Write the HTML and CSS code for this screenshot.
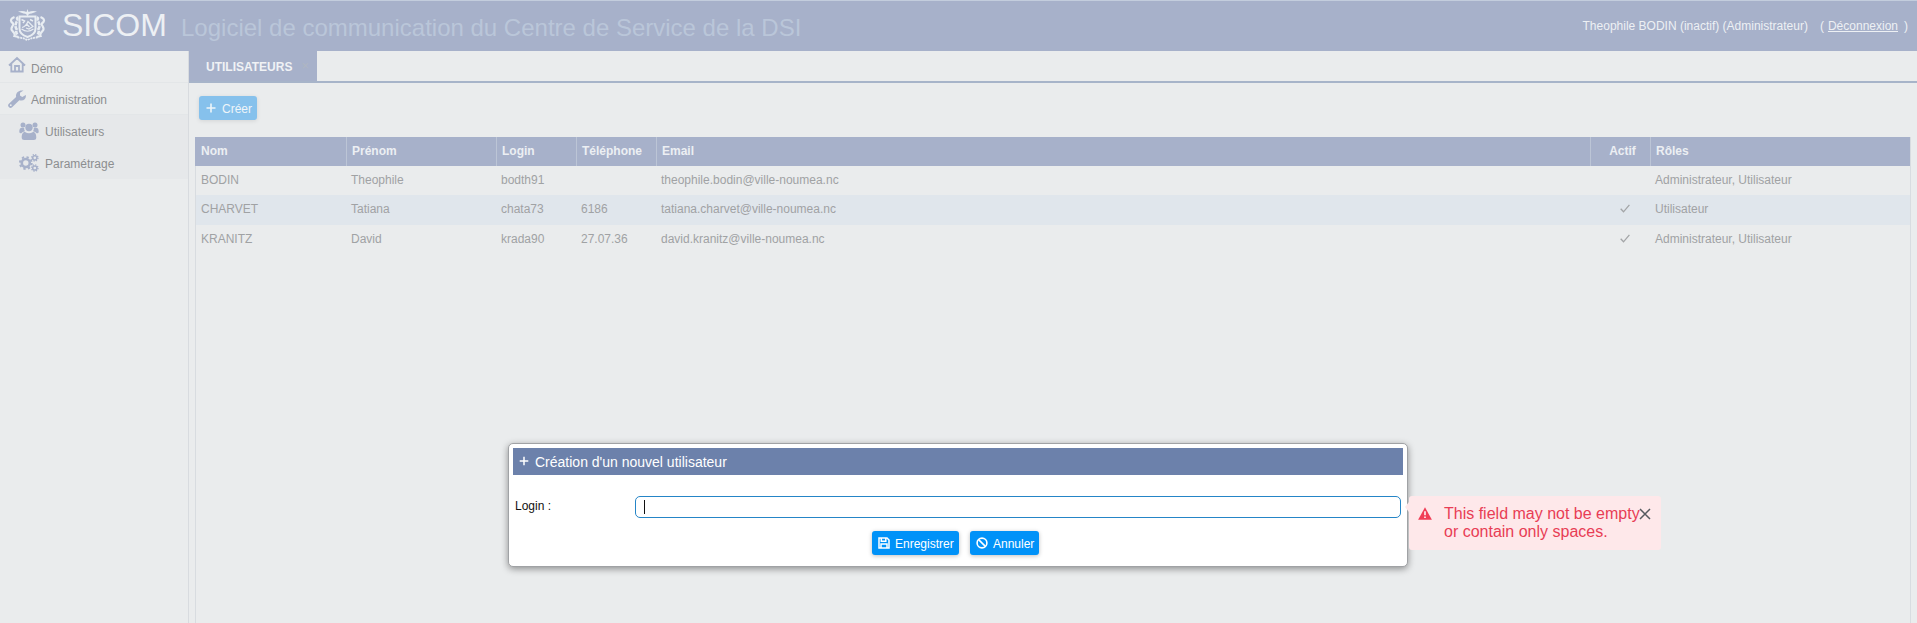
FILE: index.html
```html
<!DOCTYPE html>
<html lang="fr">
<head>
<meta charset="utf-8">
<title>SICOM</title>
<link rel="stylesheet" href="styles.css">
</head>
<body>
<header class="banner">
  <svg class="crest" viewBox="0 0 36 32" fill="none" stroke="#e8edf2" stroke-width="1.200">
    <path d="M8.500 2.500q5-1 8.500.500l1-3 1 3q4-1.500 8.500-.5l-5.500 2q-2 .2-3 1l-1 2-1-2q-1-.8-3-1z" fill="#e8edf2" stroke="none"/>
    <path d="M10 7.500h16v12q0 6-8 8.500-8-2.500-8-8.500z" stroke-width="2"/>
    <path d="M12 20q6 4.500 12 0M12.500 18.500q4-1 6-6l5 5-4 2.500-3-1M19 13l2.500 2.500M17 15l3 3" />
    <path d="M12 10.500l3 1.500-1.500 2M20.500 10.500l3 1.500" stroke-width="1.500"/>
    <path d="M5 8q-5 2-3 5 3 2 1 4-2 3 0 5 3 3 2 5l4 1M31 8q5 2 3 5-3 2-1 4 2 3 0 5-3 3-2 5l-4 1" stroke-width="2.200"/>
    <path d="M7 8q2 2 0 5-2 4 0 7-1 3 1 6M29 8q-2 2 0 5 2 4 0 7 1 3-1 6" stroke-width="2.600" stroke-dasharray="4 .8"/>
    <path d="M8 28.500q5 0 10 2.500 5-2.500 10-2.500" stroke-width="1.800" stroke-dasharray="2 .7"/>
  </svg>
  <h1 class="app-name">SICOM</h1>
  <span class="tagline">Logiciel de communication du Centre de Service de la DSI</span>
  <div class="session"><span>Theophile BODIN (inactif) (Administrateur)</span><span>(</span><a class="logout">Déconnexion</a><span>)</span></div>
</header>
<div class="workspace">
  <nav class="menu">
    <div class="item first">
      <svg class="icon" viewBox="0 0 18 18" fill="none" stroke="#a7b1ca" stroke-width="1.800"><path d="M1 9.500L9 2l8 7.500M3.300 8v7.500h11.400V8M7 15.500V10h4v5.500"/></svg>
      <span>Démo</span>
    </div>
    <div class="item">
      <svg class="icon" viewBox="0 0 18 18"><path d="M2.500 15.500L10.500 7.800" stroke="#a7b1ca" stroke-width="4.600" stroke-linecap="round"/><path d="M15.500.600L12 2.800v2.800l2.300 1.300 3.500-2c.6 3-1.300 5.700-4.500 5.700-3.300 0-5.300-2.300-5.300-5C8 2.200 11.500-.4 15.500.600z" fill="#a7b1ca"/><circle cx="2.800" cy="15.200" r=".9" fill="#eaeded"/></svg>
      <span>Administration</span>
    </div>
    <div class="item sub">
      <svg class="icon wide" viewBox="0 0 20 18" fill="#a7b1ca"><circle cx="4" cy="3" r="2.500"/><circle cx="16" cy="3" r="2.500"/><circle cx="10" cy="5.500" r="3.700"/><path d="M5.200 6C1.500 5.200.3 6 .3 10c0 1 1 1.200 2 1.200Q3.500 9.500 6 9.200 5 7.700 5.200 6zM14.800 6c3.700-.8 4.900 0 4.900 4 0 1-1 1.200-2 1.200Q16.500 9.500 14 9.200q1-1.500.8-3.200zM6 10q4 2.500 8 0c2.500 0 3.300 2.500 3.300 5.500 0 1.700-1 2.500-2.500 2.500H5.200c-1.500 0-2.500-.8-2.500-2.500C2.700 12.500 3.500 10 6 10z"/></svg>
      <span>Utilisateurs</span>
    </div>
    <div class="item sub">
      <svg class="icon wide" viewBox="0 0 20 18" fill="none" stroke="#a7b1ca"><circle cx="6.800" cy="9" r="4" stroke-width="2.600"/><circle cx="6.800" cy="9" r="5.900" stroke-width="2" stroke-dasharray="2.300 2.330"/><circle cx="15.800" cy="3.800" r="2.100" stroke-width="1.500"/><circle cx="15.800" cy="3.800" r="3.200" stroke-width="1.300" stroke-dasharray="1.250 1.260"/><circle cx="15.800" cy="14" r="2.100" stroke-width="1.500"/><circle cx="15.800" cy="14" r="3.200" stroke-width="1.300" stroke-dasharray="1.250 1.260"/></svg>
      <span>Paramétrage</span>
    </div>
  </nav>
  <main class="content">
    <div class="tabs">
      <div class="tab"><span>UTILISATEURS</span><span class="tab-close">×</span></div>
    </div>
    <div class="toolbar">
      <button class="btn create"><svg class="plus" viewBox="0 0 10 10"><path d="M5 .5v9M.5 5h9" stroke="#eef5f9" stroke-width="1.600"/></svg>Créer</button>
    </div>
    <div class="grid">
      <div class="row head"><div>Nom</div><div>Prénom</div><div>Login</div><div>Téléphone</div><div>Email</div><div class="center">Actif</div><div>Rôles</div></div>
      <div class="row"><div>BODIN</div><div>Theophile</div><div>bodth91</div><div></div><div>theophile.bodin@ville-noumea.nc</div><div></div><div>Administrateur, Utilisateur</div></div>
      <div class="row alt"><div>CHARVET</div><div>Tatiana</div><div>chata73</div><div>6186</div><div>tatiana.charvet@ville-noumea.nc</div><div class="check"><svg viewBox="0 0 10 9"><path d="M.7 4.800L3.500 7.800 9.400.8" fill="none" stroke="#a3a5a7" stroke-width="1.300"/></svg></div><div>Utilisateur</div></div>
      <div class="row last"><div>KRANITZ</div><div>David</div><div>krada90</div><div>27.07.36</div><div>david.kranitz@ville-noumea.nc</div><div class="check"><svg viewBox="0 0 10 9"><path d="M.7 4.800L3.500 7.800 9.400.8" fill="none" stroke="#a3a5a7" stroke-width="1.300"/></svg></div><div>Administrateur, Utilisateur</div></div>
    </div>
  </main>
</div>
<section class="dialog">
  <div class="dialog-title"><svg class="title-plus" viewBox="0 0 10 10"><path d="M5 .7v8.600M.7 5h8.600" stroke="#fff" stroke-width="1.500"/></svg><span>Création d'un nouvel utilisateur</span></div>
  <div class="field"><label>Login :</label><div class="input"><span class="caret"></span></div></div>
  <div class="actions">
    <button class="btn save"><svg viewBox="0 0 12 12" fill="none" stroke="#fff" stroke-width="1.500"><path d="M1 1h8l2 2v8H1zM3.300 1v3.200h4.500V1M3 11V7h6v4"/></svg>Enregistrer</button>
    <button class="btn cancel"><svg viewBox="0 0 12 12" fill="none" stroke="#fff" stroke-width="1.600"><circle cx="6" cy="6" r="4.900"/><path d="M2.600 2.600l6.800 6.800"/></svg>Annuler</button>
  </div>
</section>
<aside class="error">
  <svg class="warn" viewBox="0 0 14 13"><path d="M7 .3L13.900 12.700H.1z" fill="#f03e56"/><path d="M7 4.300v4M7 9.400v1.700" stroke="#fdeaec" stroke-width="1.700"/></svg>
  <p>This field may not be empty<br>or contain only spaces.</p>
  <svg class="dismiss" viewBox="0 0 12 12"><path d="M1 1l10 10M11 1L1 11" stroke="#555a5f" stroke-width="1.500"/></svg>
</aside>
</body>
</html>
```
FILE: styles.css
```css
* { box-sizing: border-box; }
body {
  margin: 0;
  height: 623px;
  overflow: hidden;
  display: flex;
  flex-direction: column;
  background: #eaeced;
  font: 12px/16px "Liberation Sans", Arial, sans-serif;
  white-space: nowrap;
}
.banner {
  height: 51px;
  flex: none;
  display: flex;
  align-items: flex-start;
  padding: 0 9px 0 9px;
  background: #a7b1ca;
  border-top: 1px solid #c3cddd;
  color: #edf0f4;
}
.crest { width: 37px; height: 32px; margin-top: 8px; }
.app-name { margin: 6px 0 0 16px; width: 119px; font-size: 32px; line-height: 36px; font-weight: 400; }
.tagline { margin-top: 13px; font-size: 24px; line-height: 28px; color: #bac6d9; }
.session { display: flex; margin: 17px 0 0 auto; }
.session span:nth-child(2) { margin: 0 4px 0 12px; }
.logout { margin-right: 6px; text-decoration: underline; }
.workspace { flex: 1; display: flex; min-height: 0; }
.menu { width: 189px; flex: none; border-right: 1px solid #d8dbdf; color: #8c8e90; }
.item {
  height: 32px;
  display: flex;
  align-items: center;
  padding: 3px 0 0 8px;
  border-bottom: 1px solid #e3e6e8;
}
.item.first { padding-top: 4px; }
.item.first .icon { margin-top: -5px; }
.item.sub { padding: 1px 0 0 19px; background: #e6e8ea; border: 0; }
.item .icon { width: 18px; height: 18px; margin-right: 5px; margin-bottom: 2px; }
.item .wide { width: 20px; margin-right: 6px; margin-bottom: 1px; }
.content { flex: 1; display: flex; flex-direction: column; min-width: 0; }
.tabs { height: 32px; flex: none; border-bottom: 2px solid #a7b4c9; }
.tab {
  width: 128px;
  height: 30px;
  padding: 8px 0 0 17px;
  display: flex;
  gap: 9px;
  background: #a7b1ca;
  color: #f0f2f5;
  font-weight: 700;
}
.tab-close { margin-top: -1px; font-size: 13px; color: #afb6c2; font-weight: 400; }
.toolbar { height: 54px; flex: none; padding: 13px 0 0 10px; }
.btn {
  display: flex;
  align-items: center;
  height: 24px;
  padding: 2px 0 0 6px;
  border: 0;
  border-radius: 3px;
  font: inherit;
  color: #fff;
  background: #0092f8;
  box-shadow: 0 1px 4px rgba(0, 0, 0, .25);
}
.btn svg { width: 12px; height: 12px; margin: -2px 5px 0 0; }
.create { width: 58px; background: #86c1ec; color: #eef5f9; box-shadow: 0 1px 4px rgba(0, 0, 0, .1); }
.btn .plus { width: 10px; height: 10px; margin: -2px 6px 0 1px; }
.grid { flex: 1; margin: 0 6px 0 6px; border: 1px solid #d8dce0; border-bottom: 0; border-top: 0; color: #a0a2a4; }
.row {
  display: grid;
  grid-template-columns: 151px 150px 80px 80px 934px 60px 1fr;
  height: 29px;
  line-height: 28px;
}
.row > div { padding-left: 4px; }
.row > div:first-child { padding-left: 5px; }
.row.head {
  grid-template-columns: 152px 150px 80px 80px 934px 60px 1fr;
  margin-left: -1px;
  line-height: 29px;
  background: #a7b1ca;
  color: #eceff3;
  font-weight: 700;
}
.row.head > div { padding-left: 5px; border-right: 1px solid #bcc5d6; }
.row.head > div:first-child { padding-left: 6px; }
.row.head > div:last-child { border: 0; }
.row.head > .center { padding-left: 4px; text-align: center; }
.row.alt { height: 30px; line-height: 29px; background: #e0e6ec; }
.check svg { width: 10px; height: 9px; margin-left: 25px; }
.dialog {
  position: absolute;
  left: 508px;
  top: 443px;
  width: 900px;
  height: 124px;
  padding: 4px;
  background: #fff;
  border: 1px solid #a0a2a5;
  border-radius: 5px;
  box-shadow: 0 2px 7px rgba(0, 0, 0, .4);
}
.dialog-title {
  height: 27px;
  display: flex;
  align-items: center;
  padding: 1px 0 0 6px;
  background: #6c81ab;
  color: #fff;
  font-size: 14px;
}
.title-plus { width: 10px; height: 10px; margin: -2px 6px 0 0; }
.field { display: flex; margin: 21px 2px 0; color: #111; }
.field label { width: 120px; padding-top: 2px; }
.input {
  flex: 1;
  height: 22px;
  padding: 3px 8px;
  border: 1px solid #2585c7;
  border-radius: 5px;
}
.caret { display: block; width: 1px; height: 14px; background: #111; }
.actions { display: flex; gap: 11px; margin: 13px 0 0 359px; }
.save { width: 87px; }
.cancel { width: 69px; }
.error {
  position: absolute;
  left: 1409px;
  top: 496px;
  width: 252px;
  height: 54px;
  display: flex;
  padding: 9px 10px 0 9px;
  border-radius: 3px;
  background: #fee8ea;
  color: #e83d55;
  font-size: 16px;
  line-height: 18px;
}
.error::before {
  content: "";
  position: absolute;
  left: -4px;
  top: 6px;
  border: 5px solid transparent;
  border-right: 4px solid #fee8ea;
  border-left: 0;
}
.error p { margin: 0; }
.warn { width: 14px; height: 13px; flex: none; margin: 2px 12px 0 0; }
.dismiss { position: absolute; left: 230px; top: 12px; width: 12px; height: 12px; }
```
